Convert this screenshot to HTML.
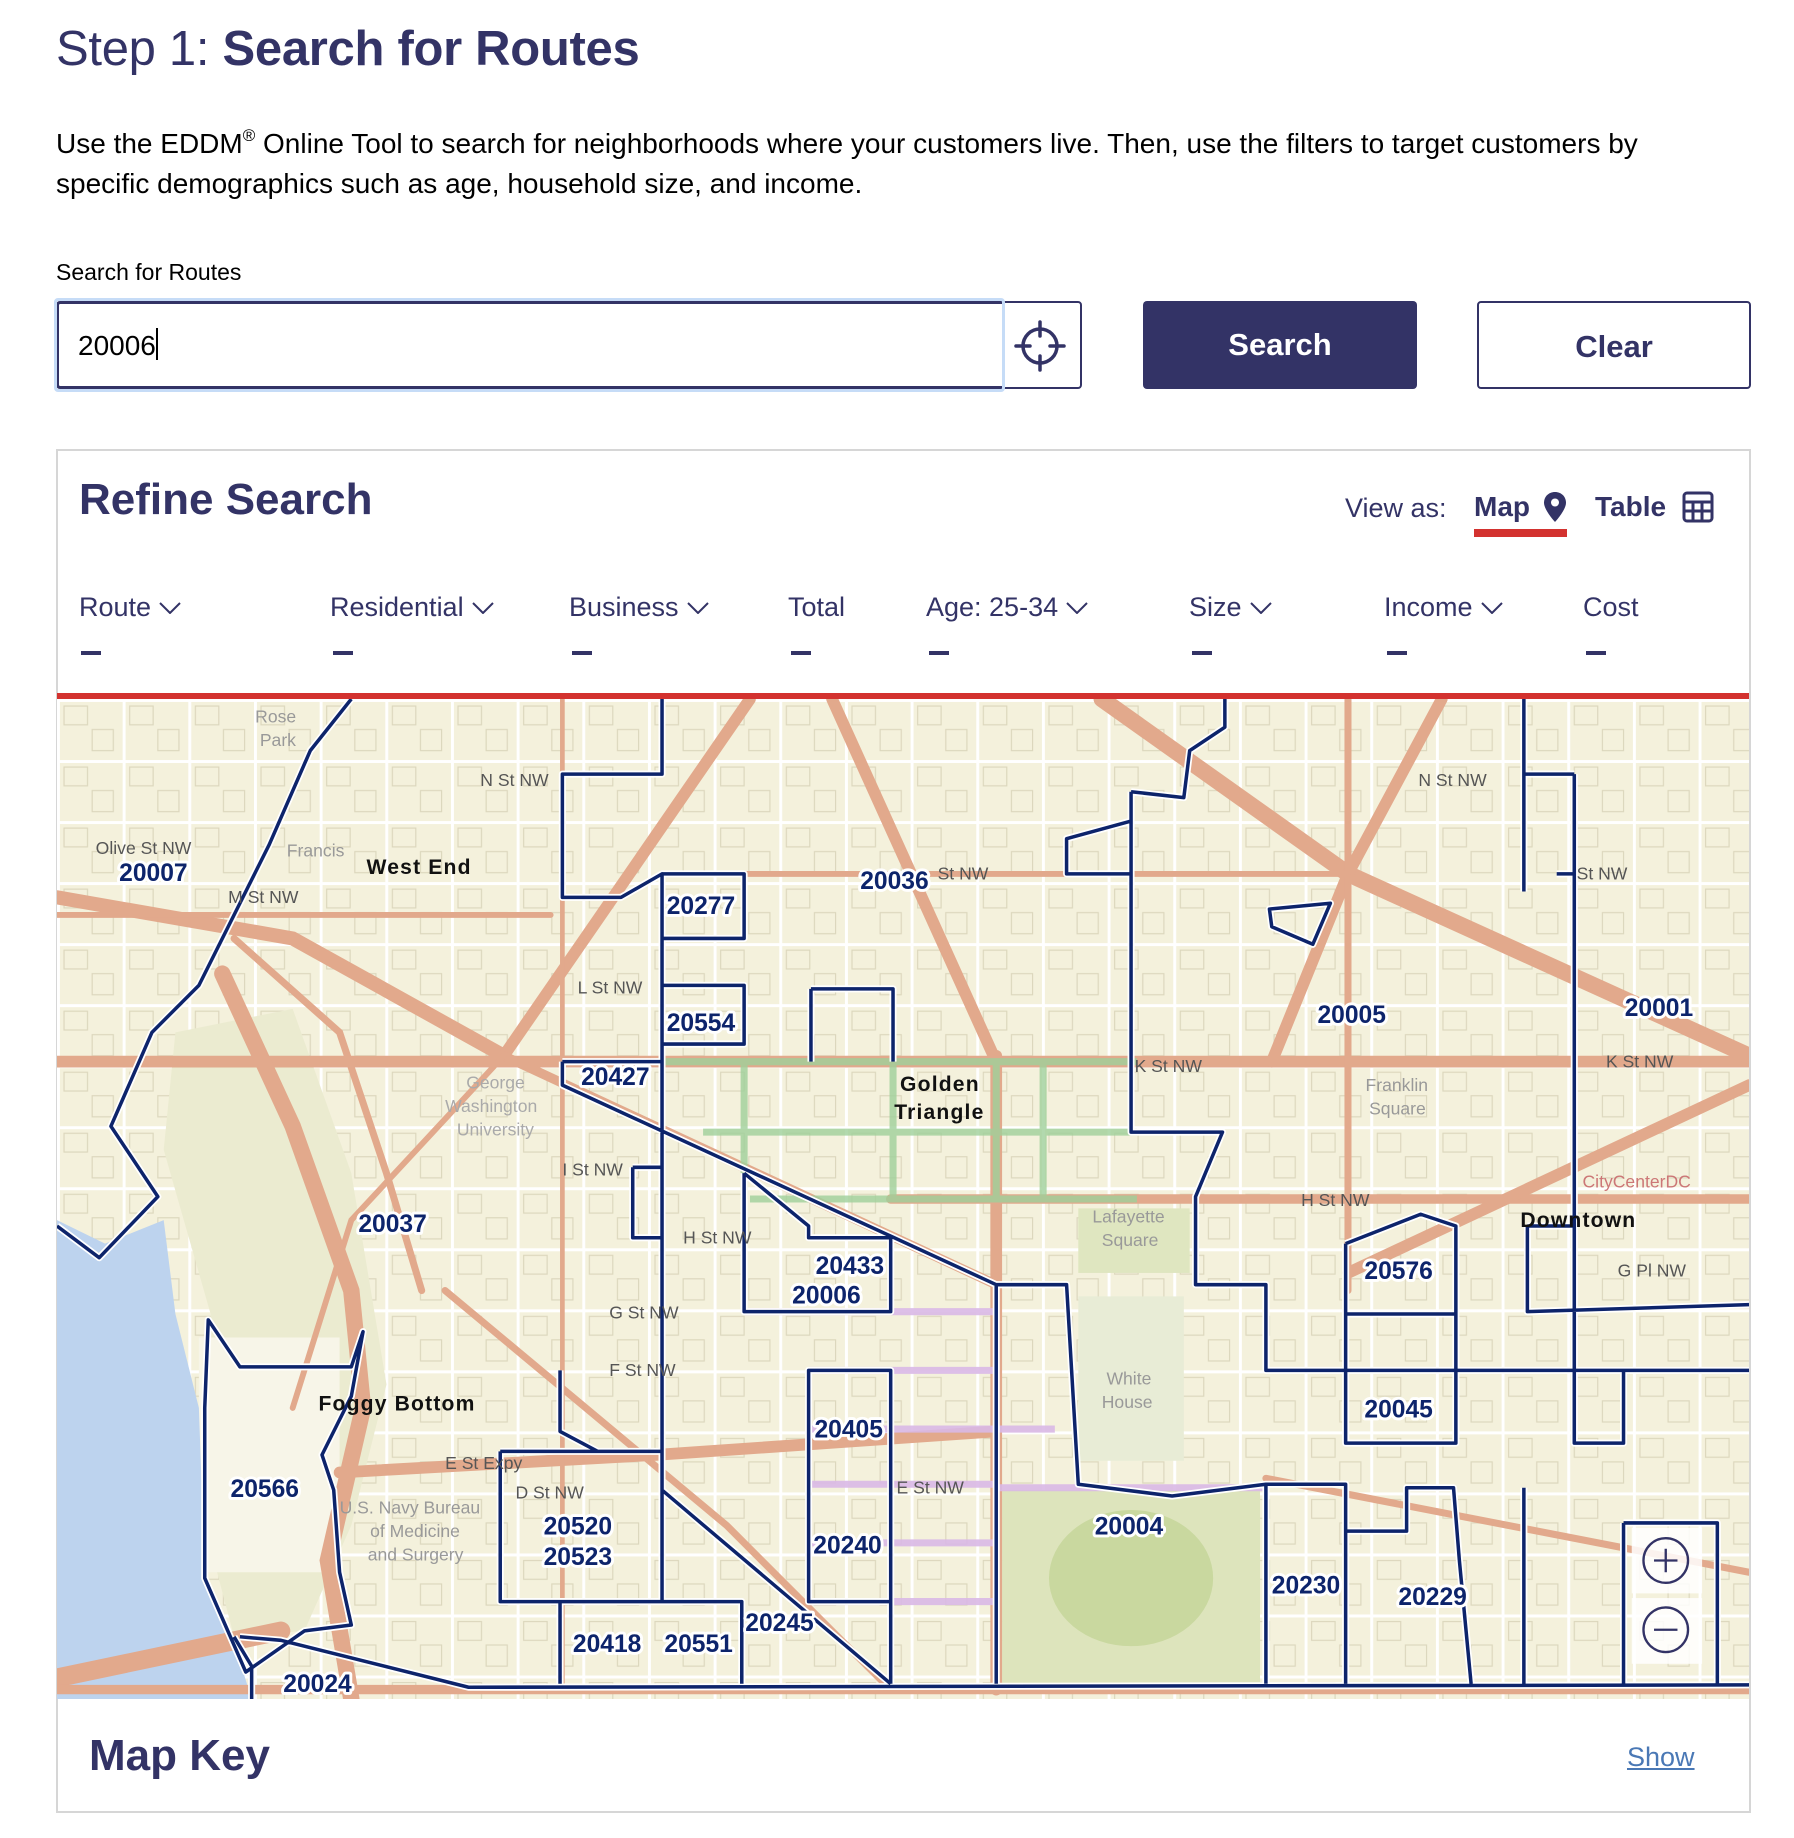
<!DOCTYPE html>
<html><head><meta charset="utf-8">
<style>
*{box-sizing:border-box;margin:0;padding:0}
html,body{width:1794px;height:1838px;background:#fff;overflow:hidden}
body{font-family:"Liberation Sans",Arial,sans-serif;color:#333366;position:relative}
.abs{position:absolute;white-space:nowrap}
h1{position:absolute;left:56px;top:21px;font-size:49px;font-weight:400;color:#333366;letter-spacing:-0.3px}
h1 b{font-weight:700}
.p{position:absolute;left:56px;top:124px;font-size:28px;line-height:40px;color:#000;width:1680px}
.p sup{font-size:17px;vertical-align:12px;line-height:0}
.lbl{left:56px;top:259px;font-size:23px;color:#000}
.inp{position:absolute;left:56px;top:301px;width:1026px;height:88px;border:2px solid #333366;border-radius:4px}
.focus{position:absolute;left:54px;top:298px;width:951px;height:94px;border:3px solid #c6dcf7;border-radius:4px}
.inpin{position:absolute;left:57px;top:302px;width:945px;height:86px;border:2px solid #333366;border-right:none;border-radius:3px 0 0 3px}
.val{left:78px;top:328px;font-size:28px;color:#000}
.btn{position:absolute;top:301px;height:88px;width:274px;border-radius:4px;font-weight:700;font-size:31px;text-align:center;line-height:88px}
.panel{position:absolute;left:56px;top:449px;width:1695px;height:1364px;border:2px solid #d6d6d6}
.col{top:592px;font-size:27px;color:#333366}
.col svg{margin-left:8px;vertical-align:2px}
.dash{position:absolute;top:651px;width:20px;height:4px;background:#333366}
</style></head><body>
<h1>Step 1: <b>Search for Routes</b></h1>
<div class="p">Use the EDDM<sup>®</sup> Online Tool to search for neighborhoods where your customers live. Then, use the filters to target customers by specific demographics such as age, household size, and income.</div>
<div class="abs lbl">Search for Routes</div>
<div class="inp"></div>
<div class="focus"></div>
<div class="inpin"></div>
<div class="abs val">20006<span style="display:inline-block;width:2px;height:32px;background:#000;vertical-align:-5px"></span></div>
<svg class="abs" style="left:1012px;top:318px" width="56" height="56" viewBox="0 0 56 56"><g fill="none" stroke="#333366" stroke-width="3.5" stroke-linecap="round"><circle cx="28" cy="28" r="17"/><path d="M28 4V18M28 38V52M4 28H18M38 28H52"/></g></svg>
<div class="btn" style="left:1143px;background:#333366;color:#fff">Search</div>
<div class="btn" style="left:1477px;border:2px solid #333366;color:#333366">Clear</div>

<div class="panel"></div>
<div class="abs" style="left:79px;top:475px;font-size:44px;font-weight:700">Refine Search</div>
<div class="abs" style="left:1345px;top:493px;font-size:27px">View as:</div>
<div class="abs" style="left:1474px;top:491px;font-size:28px;font-weight:700">Map</div>
<svg class="abs" style="left:1543px;top:491px" width="24" height="32" viewBox="0 0 24 32"><path d="M12 1C5.5 1 1 5.8 1 11.8 1 19 12 31 12 31S23 19 23 11.8C23 5.8 18.5 1 12 1Z" fill="#333366"/><circle cx="12" cy="11.5" r="4" fill="#fff"/></svg>
<div class="abs" style="left:1474px;top:529px;width:93px;height:8px;background:#d3322f"></div>
<div class="abs" style="left:1595px;top:491px;font-size:28px;font-weight:700">Table</div>
<svg class="abs" style="left:1682px;top:491px" width="32" height="32" viewBox="0 0 32 32"><g fill="none" stroke="#333366" stroke-width="3"><rect x="2" y="2" width="28" height="28" rx="3"/><path d="M2 11H30M2 20H30M11 11V30M20 11V30"/></g></svg>

<div class="abs col" style="left:79px">Route<svg width="22" height="12" viewBox="0 0 22 12"><path d="M1 1L11 11L21 1" fill="none" stroke="#333366" stroke-width="2"/></svg></div>
<div class="abs col" style="left:330px">Residential<svg width="22" height="12" viewBox="0 0 22 12"><path d="M1 1L11 11L21 1" fill="none" stroke="#333366" stroke-width="2"/></svg></div>
<div class="abs col" style="left:569px">Business<svg width="22" height="12" viewBox="0 0 22 12"><path d="M1 1L11 11L21 1" fill="none" stroke="#333366" stroke-width="2"/></svg></div>
<div class="abs col" style="left:788px">Total</div>
<div class="abs col" style="left:926px">Age: 25-34<svg width="22" height="12" viewBox="0 0 22 12"><path d="M1 1L11 11L21 1" fill="none" stroke="#333366" stroke-width="2"/></svg></div>
<div class="abs col" style="left:1189px">Size<svg width="22" height="12" viewBox="0 0 22 12"><path d="M1 1L11 11L21 1" fill="none" stroke="#333366" stroke-width="2"/></svg></div>
<div class="abs col" style="left:1384px">Income<svg width="22" height="12" viewBox="0 0 22 12"><path d="M1 1L11 11L21 1" fill="none" stroke="#333366" stroke-width="2"/></svg></div>
<div class="abs col" style="left:1583px">Cost</div>
<div class="dash" style="left:81px"></div><div class="dash" style="left:333px"></div><div class="dash" style="left:572px"></div><div class="dash" style="left:791px"></div><div class="dash" style="left:929px"></div><div class="dash" style="left:1192px"></div><div class="dash" style="left:1387px"></div><div class="dash" style="left:1586px"></div>
<div class="abs" style="left:57px;top:693px;width:1692px;height:6px;background:#d3322f"></div>

<svg class="abs" style="left:57px;top:699px" width="1692" height="1000" viewBox="49 596 1443 852" preserveAspectRatio="none">
<defs>
<pattern id="g" x="49" y="596" width="56" height="52" patternUnits="userSpaceOnUse">
<rect width="56" height="52" fill="#f4f1dc"/>
<rect x="6" y="6" width="20" height="16" fill="none" stroke="#dcd7bd" stroke-width="1"/>
<rect x="30" y="26" width="18" height="18" fill="none" stroke="#dcd7bd" stroke-width="1"/>
<path d="M0 1H56M1 0V52" stroke="#fff" stroke-width="3"/>
</pattern>
</defs>
<rect x="49" y="596" width="1443" height="852" fill="url(#g)"/>
<path d="M150 880 L250 860 L300 1000 L330 1180 L300 1300 L260 1390 L200 1395 L175 1300 L180 1120 L140 980Z" fill="#ebebd0"/>
<rect x="855" y="1270" width="220" height="170" fill="#dde4bc"/>
<ellipse cx="965" cy="1345" rx="70" ry="58" fill="#c9d89f"/>
<rect x="920" y="1030" width="95" height="55" fill="#dfe6c0"/>
<rect x="920" y="1105" width="90" height="140" fill="#e8ecd6"/>
<rect x="170" y="1140" width="120" height="200" fill="#f7f5e8"/>
<path d="M49 1040 L90 1060 L140 1040 L150 1120 L170 1200 L175 1340 L200 1400 L215 1448 L49 1448Z" fill="#bdd3ee"/>
<g fill="none" stroke="#e2a98c" stroke-linecap="round">
<path d="M49 765 L250 800 L430 900" stroke-width="12"/>
<path d="M49 905 H1492" stroke-width="10"/>
<path d="M640 596 L430 900" stroke-width="10"/>
<path d="M710 596 L850 905" stroke-width="10"/>
<path d="M940 596 L1150 745 L1492 900" stroke-width="14"/>
<path d="M1230 596 L1150 745 L1085 905" stroke-width="10"/>
<path d="M1150 596 L1150 1100" stroke-width="6"/>
<path d="M49 780 H470" stroke-width="5"/>
<path d="M630 745 H1150" stroke-width="5"/>
<path d="M760 1022 H1492" stroke-width="8"/>
<path d="M1150 1085 L1492 925" stroke-width="10"/>
<path d="M850 900 V1440" stroke-width="10"/>
<path d="M430 900 L850 1095" stroke-width="8"/>
<path d="M190 830 L250 960 L300 1100 L310 1200 L280 1330 L300 1448" stroke-width="14"/>
<path d="M49 1430 L240 1390" stroke-width="16"/>
<path d="M290 1255 L560 1240 L850 1220" stroke-width="10"/>
<path d="M200 800 L290 880 L330 1000 L360 1100" stroke-width="6"/>
<path d="M480 596 V1440" stroke-width="4"/>
<path d="M430 900 L300 1040 L250 1200" stroke-width="5"/>
<path d="M49 1440 H1492" stroke-width="8"/>
<path d="M1080 1260 L1492 1340" stroke-width="6"/>
<path d="M380 1100 L620 1300 L760 1440" stroke-width="6"/>
</g>
<g fill="none" stroke="#9fcf9a" stroke-width="6" opacity="0.8">
<path d="M560 905 H970 M600 965 H970 M640 1022 H970 M635 905 V1022 M762 905 V1022 M850 905 V1022 M890 905 L890 1022"/>
</g>
<g fill="none" stroke="#d9b8e6" stroke-width="6" opacity="0.9">
<path d="M635 1118 H850 M690 1168 H850 M690 1218 H900 M690 1265 H850 M690 1315 H850 M690 1365 H850 M850 1268 H1080"/>
</g>
<g fill="none" stroke="#fff" stroke-width="6" stroke-linejoin="round">
<path id="r" d="M300 596 L265 640 L230 720 L170 840 L130 880 L95 960 L135 1020 L85 1072 L49 1045
M178 1125 L205 1165 L300 1165 L310 1135 L300 1190 L275 1240 L285 1270 L290 1340 L300 1385 L260 1390 L210 1425 L175 1345 L175 1200Z
M200 1395 L215 1420 L215 1448 M205 1395 L240 1398 L400 1438 L1492 1436
M565 596 V660 H480 V765 H530 L565 745 V1365
M565 745 H635 V800 H565 M565 840 H635 V890 H565
M480 905 H565 M480 905 V925 L850 1095
M540 995 H565 M540 995 V1055 H565
M635 1000 V1118 H760 V1055 H690 V1045 L635 1000
M692 843 H762 V905 M692 843 V905
M690 1168 H760 V1365 H690Z
M427 1237 H565 M427 1237 V1365 H633 V1435
M478 1168 V1220 L510 1237 M478 1365 V1435
M565 1270 L760 1435 M760 1365 V1435
M850 1095 H910 L920 1265 L1000 1275 L1080 1265 H1148 V1435 M850 1095 V1435 M1080 1265 V1435
M965 675 V965 H1043 L1020 1020 V1095 H1080 V1168 H1492
M910 715 L965 700 V745 H910Z
M965 675 L1010 680 L1015 640 L1045 620 V596
M1083 775 L1135 770 L1120 805 L1085 790Z
M1148 1060 L1212 1035 L1242 1045 V1230 H1148 V1060 M1148 1120 H1242
M1343 660 V1230 H1385 V1168 M1300 660 H1343 M1300 596 V760 M1328 745 H1343
M1303 1045 H1343 M1303 1045 V1118 L1492 1112
M1148 1305 H1200 V1268 H1240 L1245 1330 L1255 1435
M1300 1268 V1435
M1385 1298 H1465 V1435 M1385 1298 V1435"/>
</g>
<use href="#r" fill="none" stroke="#0d246b" stroke-width="3" stroke-linejoin="round"/>
<g font-family="Liberation Sans,Arial,sans-serif" font-size="15" fill="#555" >
<text x="410" y="670">N St NW</text><text x="82" y="728">Olive St NW</text><text x="195" y="770">M St NW</text>
<text x="493" y="847">L St NW</text><text x="480" y="1002">I St NW</text><text x="583" y="1060">H St NW</text>
<text x="520" y="1124">G St NW</text><text x="520" y="1173">F St NW</text><text x="800" y="750">St NW</text>
<text x="1210" y="670">N St NW</text><text x="1345" y="750">St NW</text><text x="968" y="914">K St NW</text>
<text x="1370" y="910">K St NW</text><text x="1110" y="1028">H St NW</text><text x="1380" y="1088">G Pl NW</text>
<text x="440" y="1277">D St NW</text><text x="380" y="1252">E St Expy</text><text x="765" y="1273">E St NW</text>
<text x="1350" y="1012" fill="#c77">CityCenterDC</text>
<text x="398" y="928" fill="#aaa">George</text><text x="380" y="948" fill="#aaa">Washington</text><text x="390" y="968" fill="#aaa">University</text>
<text x="1165" y="930" fill="#999">Franklin</text><text x="1168" y="950" fill="#999">Square</text>
<text x="932" y="1042" fill="#999">Lafayette</text><text x="940" y="1062" fill="#999">Square</text>
<text x="944" y="1180" fill="#999">White</text><text x="940" y="1200" fill="#999">House</text>
<text x="290" y="1290" fill="#999">U.S. Navy Bureau</text><text x="316" y="1310" fill="#999">of Medicine</text><text x="314" y="1330" fill="#999">and Surgery</text>
<text x="218" y="616" fill="#999">Rose</text><text x="222" y="636" fill="#999">Park</text><text x="245" y="730" fill="#999">Francis</text>
</g>
<g font-family="Liberation Sans,Arial,sans-serif" font-size="18" fill="#111" font-weight="700" letter-spacing="1">
<text x="313" y="745">West End</text><text x="768" y="930">Golden</text><text x="763" y="954">Triangle</text>
<text x="272" y="1202">Foggy Bottom</text><text x="1297" y="1046">Downtown</text>
</g>
<g font-family="Liberation Sans,Arial,sans-serif" font-size="21" font-weight="700" fill="#0d246b" stroke="#fff" stroke-width="5" paint-order="stroke" stroke-linejoin="round">
<text x="102" y="751">20007</text><text x="734" y="758">20036</text><text x="569" y="779">20277</text>
<text x="569" y="879">20554</text><text x="496" y="925">20427</text><text x="1124" y="872">20005</text>
<text x="1386" y="866">20001</text><text x="306" y="1050">20037</text><text x="696" y="1086">20433</text>
<text x="676" y="1111">20006</text><text x="1164" y="1090">20576</text><text x="1164" y="1208">20045</text>
<text x="695" y="1225">20405</text><text x="197" y="1276">20566</text><text x="464" y="1308">20520</text>
<text x="464" y="1334">20523</text><text x="934" y="1308">20004</text><text x="694" y="1324">20240</text>
<text x="1085" y="1358">20230</text><text x="1193" y="1368">20229</text><text x="636" y="1390">20245</text>
<text x="489" y="1408">20418</text><text x="567" y="1408">20551</text><text x="242" y="1442">20024</text>
</g>
<rect x="1392" y="1302" width="60" height="56" fill="#fff" opacity="0.85"/>
<rect x="1392" y="1362" width="60" height="56" fill="#fff" opacity="0.85"/>
<g fill="none" stroke="#333366" stroke-width="2"><circle cx="1421" cy="1330" r="19"/><circle cx="1421" cy="1389" r="19"/><path d="M1411 1330H1431M1421 1320V1340M1411 1389H1431"/></g>
</svg>

<div class="abs" style="left:89px;top:1731px;font-size:44px;font-weight:700">Map Key</div>
<div class="abs" style="left:1627px;top:1742px;font-size:27px;color:#4a78b5;text-decoration:underline">Show</div>
</body></html>
